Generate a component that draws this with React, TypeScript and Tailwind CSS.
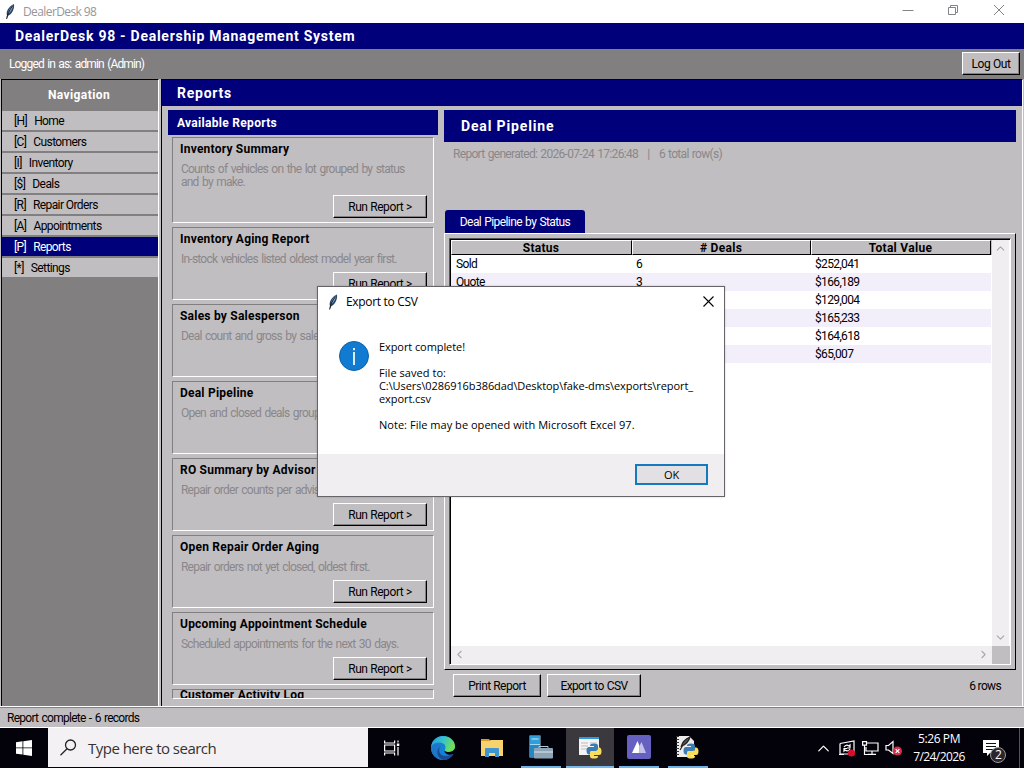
import type { ReactNode } from "react"
import { ChevronDown, ChevronLeft, ChevronRight, ChevronUp } from "lucide-react"

const navItems = [
  { key: "H", label: "Home" },
  { key: "C", label: "Customers" },
  { key: "I", label: "Inventory" },
  { key: "$", label: "Deals" },
  { key: "R", label: "Repair Orders" },
  { key: "A", label: "Appointments" },
  { key: "P", label: "Reports", active: true },
  { key: "*", label: "Settings" },
]

const reports = [
  { title: "Inventory Summary", text: "Counts of vehicles on the lot grouped by status and by make.", tall: true },
  { title: "Inventory Aging Report", text: "In-stock vehicles listed oldest model year first." },
  { title: "Sales by Salesperson", text: "Deal count and gross by salesperson." },
  { title: "Deal Pipeline", text: "Open and closed deals grouped by status." },
  { title: "RO Summary by Advisor", text: "Repair order counts per advisor." },
  { title: "Open Repair Order Aging", text: "Repair orders not yet closed, oldest first." },
  { title: "Upcoming Appointment Schedule", text: "Scheduled appointments for the next 30 days." },
]

const rows = [
  ["Sold", "6", "$252,041"],
  ["Quote", "3", "$166,189"],
  ["", "", "$129,004"],
  ["", "", "$165,233"],
  ["", "", "$164,618"],
  ["", "", "$65,007"],
]

function Feather({ className }: { className?: string }) {
  return (
    <svg viewBox="0 0 10 16" className={className}>
      <path d="M1.6 15.5 2 12C.8 8 3.500 3 9 .5 9.600 4 8 10 3.200 12.300z" fill="#29435f" />
      <path d="M3 10.500C3 7 5 3.500 8.300 1.500 7.800 5 6 8.500 3 10.500" fill="#7ea3cf" />
      <path d="M1.600 15.500C2.500 11 4 7 7.500 2.500" stroke="#101418" strokeWidth=".9" fill="none" />
    </svg>
  )
}

function Button({ className, children }: { className: string; children: ReactNode }) {
  return (
    <button
      className={`flex h-[23px] shrink-0 items-center justify-center border border-t-white border-l-white border-r-black border-b-black bg-[#c1bec1] pt-px shadow-[inset_-1px_-1px_0_#827f81] ${className}`}
    >
      {children}
    </button>
  )
}

function ReportCard({ title, text, tall }: { title: string; text: string; tall?: boolean }) {
  return (
    <div
      className={`flex shrink-0 flex-col border border-t-[#827f81] border-l-[#827f81] border-r-white border-b-white pr-[6px] pb-1 pl-[7px] ${tall ? "h-[86px]" : "h-[73px]"}`}
    >
      <h3 className="pt-[4px] leading-[15px] font-bold tracking-[0.22px] whitespace-nowrap">{title}</h3>
      <p className="mt-[6px] ml-px w-[228px] leading-[13px] tracking-[-0.77px] [word-spacing:1.2px] text-[#8a878a]">{text}</p>
      <Button className="mt-auto ml-auto w-[94px] tracking-[-0.4px]">Run Report &gt;</Button>
    </div>
  )
}

function HeaderCell({ className, children }: { className: string; children: ReactNode }) {
  return (
    <div
      className={`flex items-center justify-center border border-t-white border-l-white border-r-black border-b-black pr-px font-bold tracking-[0.3px] ${className}`}
    >
      {children}
    </div>
  )
}

function PythonMark({ className }: { className?: string }) {
  return (
    <svg viewBox="0 0 16 16" className={className}>
      <path d="M4 4V2.500Q4 .5 8 .5t4 2V6q0 2-2 2H6Q4 8 4 10v1.500H2.500Q.5 11 .5 7.500T3 4h5V3H4z" fill="#3c7cb4" />
      <path d="M12 12v1.500q0 2-4 2t-4-2V10q0-2 2-2h4q2 0 2-2V4.500h1.500q2 .5 2 4T13 12H8v1h4z" fill="#f9dc5c" />
    </svg>
  )
}

function TaskItem({ className, children }: { className: string; children: ReactNode }) {
  return <div className={`flex h-10 shrink-0 items-center justify-center ${className}`}>{children}</div>
}

function Taskbar() {
  return (
    <footer className="flex h-10 shrink-0 bg-[#03010a] font-['Open_Sans','Noto_Sans',sans-serif] text-white">
      <TaskItem className="w-12">
        <svg viewBox="0 0 16 16" className="size-4 fill-white">
          <path d="M0 2.200 6.500 1.300v6.200H0zM7.300 1.200 16 0v7.500H7.300zM0 8.300h6.500v6.300L0 13.800zM7.300 8.300H16V16l-8.700-1.200z" />
        </svg>
      </TaskItem>
      <div className="flex h-[39px] w-80 items-center bg-[#f3f1f4] pl-3">
        <svg viewBox="0 0 17 17" className="size-[17px] fill-none stroke-[#222] stroke-[1.3]">
          <circle cx="10.500" cy="6" r="5" />
          <path d="M7 9.700.5 16.300" />
        </svg>
        <span className="ml-[11px] text-[15px] tracking-[-0.52px] text-[#333]">Type here to search</span>
      </div>
      <TaskItem className="w-12">
        <svg viewBox="0 0 16 16" className="size-4 fill-none stroke-white stroke-[1.200]">
          <path d="M.6.500v2.500h10V.500M.6 15.500V13h10v2.500M.6 5h10v6H.6zM14 .500v2M14 7v8.500" />
          <path d="M12.800 3.500h2.500v2.500h-2.500z" fill="#fff" stroke="none" />
        </svg>
      </TaskItem>
      <TaskItem className="w-[54px]">
        <svg viewBox="0 0 24 24" className="size-6">
          <defs>
            <linearGradient id="edge" x1="0" y1="0" x2="1" y2=".4">
              <stop offset="0" stopColor="#2499e0" />
              <stop offset=".5" stopColor="#35c1cf" />
              <stop offset="1" stopColor="#70df58" />
            </linearGradient>
          </defs>
          <circle cx="12" cy="12" r="12" fill="#1681d4" />
          <path d="M9 9c-4 4-2 12 7 14.300C9 26 0 20 0 12c2-5 6-5 9-3" fill="#1d76c8" />
          <path d="M9.500 10c-3 4-1 10 5 10 3.500 0 6-1 8-2.500-2 4-6 6.500-10 6.500-7-2-8-10-3-14" fill="#174b94" />
          <path d="M0 11C1 4 6 0 12 0c7 0 12 5 12 10 0 4-3 6-6.500 6-3 0-4.500-1-3.500-2.500C16 9 12 6.500 8 6.500 4 6.500 1 8.500 0 11" fill="url(#edge)" />
          <path d="M14 13.500c-1 1.500.5 2.500 3.500 2.500 3 0 5-1 6.500-3.500V18h-2c-3 1.500-8 .5-8.500-2.500z" fill="#03010a" />
        </svg>
      </TaskItem>
      <TaskItem className="w-[44px]">
        <svg viewBox="0 0 22 20" className="h-5 w-[22px]">
          <path d="M0 1h8l2 3H0z" fill="#d99c27" />
          <path d="M0 3h8l2-1h12v16H0z" fill="#f8d26c" />
          <path d="M4 19v-8q0-1 1-1h12q1 0 1 1v8h-4v-4H8v4z" fill="#3f95d1" />
        </svg>
      </TaskItem>
      <div className="ml-[7px] flex">
        <TaskItem className="w-10 border-b-2 border-[#6fb2e6]">
          <svg viewBox="0 0 24 24" className="size-6">
            <path d="M.5.500h11v22H.5z" fill="#a5d7f0" />
            <path d="M1 1h10v8H1z" fill="#2f9fdc" />
            <path d="M2.500 4h7" stroke="#c7ebfb" />
            <path d="M1 10h10v12H1z" fill="#2587c3" />
            <path d="M10 13v-1.500h9V13" stroke="#b9c8d3" fill="none" />
            <rect x="5" y="13" width="19" height="10.500" rx="1" fill="#8ca4b6" />
            <path d="M5 17h19" stroke="#dde7ed" />
          </svg>
        </TaskItem>
        <TaskItem className="ml-[5px] w-12 border-b-2 border-[#79b8e9] bg-[#3b393e]">
          <span className="relative block size-6">
            <svg viewBox="0 0 24 24" className="size-6">
              <path d="M1 2h20v18H1z" fill="#f5f4f5" />
              <path d="M1 2h20v2H1z" fill="#2e99df" />
              <path d="M3 8h7M3 11h7M3 14h7M12 8h7" stroke="#bbb" />
            </svg>
            <PythonMark className="absolute top-[8px] left-[8px] size-[16px]" />
          </span>
        </TaskItem>
        <TaskItem className="ml-[5px] w-10 border-b-2 border-[#6fb2e6]">
          <svg viewBox="0 0 24 24" className="size-6">
            <rect width="24" height="24" rx="2" fill="#6660c1" />
            <path d="M5 18 10.500 6l2 5v7z" fill="#fff" />
            <path d="M12.500 18v-7l2-4L19 18z" fill="#c5c1eb" />
          </svg>
        </TaskItem>
        <TaskItem className="ml-[9px] w-10 border-b-2 border-[#6fb2e6]">
          <span className="relative block size-6">
            <svg viewBox="0 0 24 24" className="size-6">
              <path d="M1 1h12l5 5v16H1z" fill="#eeeced" />
              <path d="M1.500 1v21" stroke="#333" strokeWidth="3" strokeDasharray="1 2" />
              <path d="M5 12C6 8 9 4 14 2c-1 4-4 7-8 9M4 15l3-5" stroke="#222" strokeWidth="1.200" fill="#555" />
            </svg>
            <PythonMark className="absolute top-[8px] left-[7px] size-[16px]" />
          </span>
        </TaskItem>
      </div>
      <div className="ml-auto flex items-center">
        <ChevronUp size={19} strokeWidth={1.600} className="mr-px" />
        <svg viewBox="0 0 18 18" className="ml-[4px] size-[18px] fill-none stroke-white stroke-[1.200]">
          <path d="M2 4.500 16 2v11M2 4.500V15h9M1 15.500h5" />
          <path d="M6 8q2-3 5-1l1-1v3H9M12 10q-2 3-5 1l-1 1V9.500h3" />
          <circle cx="13.500" cy="14" r="3.600" fill="#d80f2c" stroke="none" />
        </svg>
        <svg viewBox="0 0 17 16" className="ml-[6px] h-4 w-[17px] fill-none stroke-white stroke-[1.200]">
          <path d="M5 3h11v8H4V7M10 11v3M6 14.400h8M.600 1.600H4.500v3.500H.600zM2.500 5v9.500H6" />
        </svg>
        <svg viewBox="0 0 18 16" className="ml-[6px] h-4 w-[18px] fill-none stroke-white stroke-[1.200]">
          <path d="M1 5.500h2.500L8 1.500v12L3.500 10H1z" />
          <circle cx="12.500" cy="11" r="4.500" fill="#d62f48" stroke="none" />
          <path d="m10.700 9.200 3.600 3.600m0-3.600-3.600 3.600" />
        </svg>
        <div className="ml-[8px] w-[56px] text-center text-[12px] leading-[18px] whitespace-nowrap">
          <div className="tracking-[-0.4px]">5:26 PM</div>
          <div className="tracking-[-0.6px]">7/24/2026</div>
        </div>
        <div className="relative ml-4 h-10 w-9">
          <svg viewBox="0 0 17 17" className="mt-[12px] size-[17px]">
            <path d="M0 0h16v13H7l-3 3v-3H0z" fill="#fff" />
            <path d="M3 3.500h10M3 6.500h10M3 9.500h7" stroke="#111" />
          </svg>
          <span className="absolute top-[19px] left-[7px] flex size-[16px] items-center justify-center rounded-full border border-[#9a989c] bg-[#29272d] text-[12px]">
            2
          </span>
        </div>
        <div className="h-10 w-[5px] border-l border-[#55535a]" />
      </div>
    </footer>
  )
}

function ExportDialog() {
  return (
    <div className="absolute top-[286px] left-[317px] flex h-[211px] w-[408px] flex-col border border-[#666468] bg-white font-['Open_Sans','Noto_Sans',sans-serif] shadow-[0_0_2px_rgba(0,0,0,0.2)]">
      <div className="flex h-[29px] shrink-0 items-center pr-[10px] pl-[10px]">
        <Feather className="h-4 w-[10px]" />
        <span className="ml-[8px] text-[12px] tracking-[-0.32px]">Export to CSV</span>
        <svg viewBox="0 0 11 11" className="ml-auto size-[11px] stroke-black stroke-[1.100]">
          <path d="m.5.500 10 10m0-10-10 10" />
        </svg>
      </div>
      <div className="flex flex-1 pt-[24px] pl-[21px]">
        <svg viewBox="0 0 30 30" className="mt-px size-[30px]">
          <circle cx="15" cy="15" r="14.500" fill="#107bd0" stroke="#0b62aa" />
          <path d="M15 7v2.200M15 11v13" stroke="#fff" strokeWidth="1.700" />
        </svg>
        <div className="ml-[10px] text-[11px] leading-[13px] tracking-[-0.08px] whitespace-nowrap">
          <p>Export complete!</p>
          <p className="mt-[13px] tracking-[0.05px]">File saved to:</p>
          <p>C:\Users\0286916b386dad\Desktop\fake-dms\exports\report_</p>
          <p>export.csv</p>
          <p className="mt-[13px] tracking-[0.03px]">Note: File may be opened with Microsoft Excel 97.</p>
        </div>
      </div>
      <div className="flex h-[42px] shrink-0 items-center justify-end bg-[#f0eef1] pr-4">
        <button className="mb-[2px] flex h-[21px] w-[73px] items-center justify-center border-2 border-[#1678bd] bg-[#e2e0e3] pt-px text-[11px] tracking-[-0.2px]">
          OK
        </button>
      </div>
    </div>
  )
}

export default function App() {
  return (
    <div className="relative flex h-[768px] w-[1024px] flex-col overflow-hidden bg-[#c1bec1] font-['Roboto','Liberation_Sans',sans-serif] text-[12px] leading-[14px] tracking-[-0.65px] text-black">
      <div className="flex h-[23px] shrink-0 items-center bg-white pl-[5px] text-[#98959a]">
        <Feather className="h-[17px] w-[10px]" />
        <span className="ml-2 font-['Open_Sans','Noto_Sans',sans-serif] tracking-[-0.6px]">DealerDesk 98</span>
        <svg viewBox="0 0 110 12" className="mr-[18px] mb-[3px] ml-auto h-3 w-[110px] fill-none stroke-[#858287]">
          <path d="M6.500 6.500h11M52.500 3.500h7v7h-7zM54.500 3.500v-2h7v7h-2M98 1l10 10m0-10L98 11" />
        </svg>
      </div>
      <h1 className="flex h-[26px] shrink-0 items-center bg-[#00007b] pl-[15px] text-[14px] font-bold tracking-[0.73px] text-white">
        DealerDesk 98 - Dealership Management System
      </h1>
      <div className="flex h-[30px] shrink-0 items-center justify-between bg-[#827f81] pr-1 pl-[9px] text-white">
        <span className="tracking-[-0.85px] [word-spacing:1.200px]">Logged in as: admin (Admin)</span>
        <Button className="mb-[2px] w-[58px] tracking-[-0.4px] text-black">Log Out</Button>
      </div>

      <div className="flex h-[627px] shrink-0">
        <nav className="ml-px w-[158px] border-t border-r border-l border-black border-r-white bg-[#827f81]">
          <div className="flex h-[29px] items-center justify-center pr-[2px] font-bold tracking-[0.4px] text-white">
            Navigation
          </div>
          {navItems.map((item) => (
            <div
              key={item.key}
              className={`mt-[2px] flex h-[19px] items-center pl-3 tracking-[-0.6px] whitespace-pre ${item.active ? "bg-[#00007b] text-white" : "bg-[#c1bec1]"}`}
            >
              <span className="mr-[7px]">[{item.key}]</span>
              {item.label}
            </div>
          ))}
        </nav>
        <main className="ml-[2px] flex w-[862px] flex-col border-t border-r border-l border-black border-r-white">
          <h2 className="flex h-[26px] shrink-0 items-center bg-[#00007b] pl-[15px] text-[14px] font-bold tracking-[0.75px] text-white">
            Reports
          </h2>
          <div className="flex min-h-0 flex-1 gap-[6px] pt-1 pl-[6px]">
            <section className="flex w-[270px] flex-col">
              <h3 className="flex h-[25px] shrink-0 items-center bg-[#00007b] pl-[9px] font-bold tracking-[0.3px] text-white">
                Available Reports
              </h3>
              <div className="mt-[2px] ml-1 flex h-[562px] w-[262px] flex-col gap-1">
                {reports.map((report) => (
                  <ReportCard key={report.title} {...report} />
                ))}
                <div className="h-[10px] shrink-0 overflow-hidden border border-t-[#827f81] border-l-[#827f81] border-r-white border-b-white pl-[7px]">
                  <h3 className="-mt-[2px] leading-[14px] font-bold tracking-[0.22px]">Customer Activity Log</h3>
                </div>
              </div>
            </section>

            <section className="flex w-[572px] flex-col">
              <h3 className="flex h-8 shrink-0 items-center bg-[#00007b] pl-[17px] text-[14px] font-bold tracking-[0.85px] text-white">
                Deal Pipeline
              </h3>
              <p className="mt-[5px] pl-[9px] tracking-[-0.68px] [word-spacing:0.800px] whitespace-pre text-[#8a878a]">
                {"Report generated: 2026-07-24 17:26:48   |   6 total row(s)"}
              </p>
              <div className="mt-[49px] ml-px flex h-[23px] w-[140px] shrink-0 items-center justify-center rounded-t-[3px] bg-[#00007b] tracking-[-0.6px] [word-spacing:0.800px] text-white">
                Deal Pipeline by Status
              </div>
              <div className="h-[437px] shrink-0 border border-t-white border-r-black border-b-black border-l-white p-[4px]">
                <div className="flex h-[427px] w-[562px] flex-col border border-t-[#55535a] border-l-[#55535a] border-r-white border-b-white">
                  <div className="flex min-h-0 flex-1 border-t border-l border-black">
                    <div className="flex w-[541px] flex-col bg-white">
                      <div className="flex h-[15px] shrink-0 bg-[#c1bec1]">
                        <HeaderCell className="w-[181px]">Status</HeaderCell>
                        <HeaderCell className="w-[179px]"># Deals</HeaderCell>
                        <HeaderCell className="w-[180px]">Total Value</HeaderCell>
                      </div>
                      {rows.map(([status, deals, value]) => (
                        <div key={value} className="flex h-[18px] w-[540px] items-center even:bg-white odd:bg-[#f2eefa]">
                          <span className="w-[181px] pl-[5px]">{status}</span>
                          <span className="w-[179px] pl-1">{deals}</span>
                          <span className="pl-[4px]">{value}</span>
                        </div>
                      ))}
                      <div className="mt-auto flex h-[18px] shrink-0 items-center justify-between bg-[#f0eef1] px-[2px] pb-px text-[#aaa7aa]">
                        <ChevronLeft size={13} />
                        <ChevronRight size={13} />
                      </div>
                    </div>
                    <div className="flex w-[18px] flex-col">
                      <div className="flex flex-1 flex-col items-center justify-between border-r border-white bg-[#f0eef1] py-[2px] pr-px text-[#aaa7aa]">
                        <ChevronUp size={13} />
                        <ChevronDown size={13} />
                      </div>
                      <div className="h-[18px] shrink-0" />
                    </div>
                  </div>
                </div>
              </div>
              <div className="mt-1 flex items-center pr-[15px] pl-[9px]">
                <Button className="w-[88px] tracking-[-0.5px]">Print Report</Button>
                <Button className="ml-[6px] w-[94px] tracking-[-0.65px] [word-spacing:0.800px]">Export to CSV</Button>
                <span className="ml-auto">6 rows</span>
              </div>
            </section>
          </div>
        </main>
      </div>
      <div className="flex h-[22px] shrink-0 items-center border-y border-white pt-px pl-[7px] tracking-[-0.73px] [word-spacing:1px] shadow-[inset_0_1px_0_#827f81]">
        Report complete - 6 records
      </div>
      <Taskbar />
      <ExportDialog />
    </div>
  )
}
